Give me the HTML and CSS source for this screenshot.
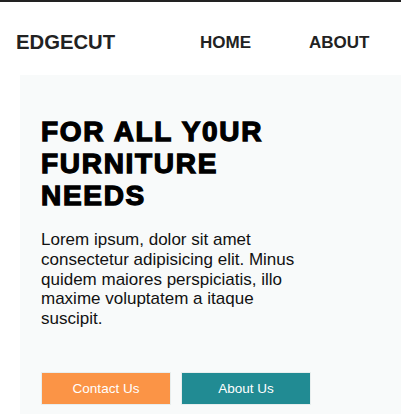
FILE: index.html
```html
<!DOCTYPE html>
<html>
<head>
<meta charset="utf-8">
<link rel="stylesheet" href="styles.css">
</head>
<body>
<header class="top">
  <div class="logo">EDGECUT</div>
  <nav class="nav">
    <a class="nav-link" href="#">HOME</a>
    <a class="nav-link" href="#">ABOUT</a>
  </nav>
</header>
<section class="hero">
  <h1 class="title">FOR ALL Y0UR FURNITURE NEEDS</h1>
  <p class="lead">Lorem ipsum, dolor sit amet consectetur adipisicing elit. Minus quidem maiores perspiciatis, illo maxime voluptatem a itaque suscipit.</p>
  <div class="actions">
    <a class="btn btn-orange" href="#">Contact Us</a>
    <a class="btn btn-teal" href="#">About Us</a>
  </div>
</section>
</body>
</html>
```
FILE: styles.css
```css
html, body { margin: 0; padding: 0; }
body {
  font-family: "Liberation Sans", Arial, sans-serif;
  color: #222;
  background: #fff;
  border-top: 2px solid #222;
  overflow: hidden;
  height: 412px;
}
.top {
  display: flex;
  align-items: center;
  box-sizing: border-box;
  height: 73px;
  padding-top: 8px;
  padding-left: 16px;
}
.logo {
  font-weight: bold;
  font-size: 20.3px;
  width: 184px;
  color: #222;
}
.nav { display: flex; gap: 58px; }
.nav-link {
  font-weight: bold;
  font-size: 17px;
  color: #222;
  text-decoration: none;
}
.hero {
  box-sizing: border-box;
  margin-left: 20px;
  background: #f8fafa;
  padding: 41px 21px 0;
  height: 339px;
}
.title {
  margin: 0;
  font-size: 28px;
  line-height: 32px;
  font-weight: bold;
  color: #000;
  letter-spacing: 1.7px;
  -webkit-text-stroke: 1.3px #000;
  width: 290px;
}
.lead {
  margin: 18px 0 0;
  font-size: 17px;
  line-height: 19.75px;
  color: #111;
  width: 265px;
}
.actions {
  display: flex;
  gap: 10px;
  margin-top: 43px;
}
.btn {
  display: flex;
  align-items: center;
  justify-content: center;
  width: 128px;
  height: 31px;
  font-size: 13.5px;
  color: #fff;
  text-decoration: none;
  border: 1px solid #e8eeee;
}
.btn-orange { background: #fb9446; }
.btn-teal { background: #218b93; }
```
